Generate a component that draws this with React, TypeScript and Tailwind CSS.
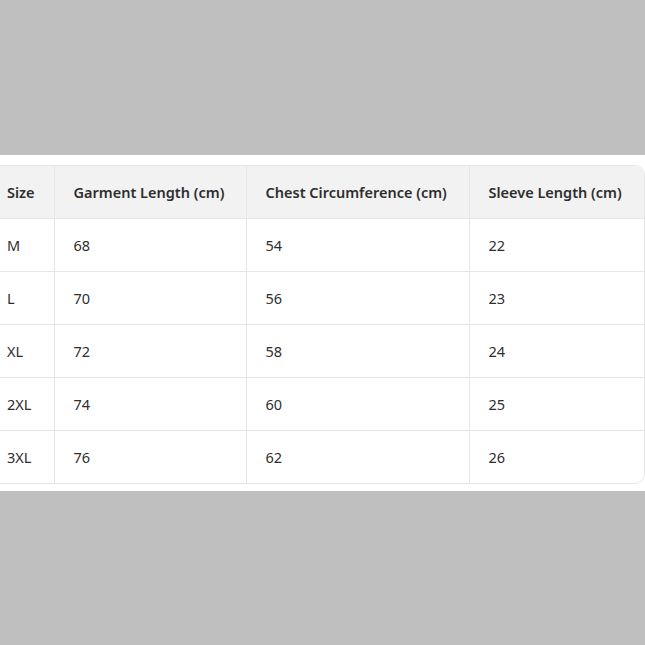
const headers = ["Size", "Garment Length (cm)", "Chest Circumference (cm)", "Sleeve Length (cm)"];

const rows = [
  ["M", "68", "54", "22"],
  ["L", "70", "56", "23"],
  ["XL", "72", "58", "24"],
  ["2XL", "74", "60", "25"],
  ["3XL", "76", "62", "26"],
];

const widths = ["w-[66px]", "w-[192px]", "w-[223px]", "w-[175px]"];

export default function App() {
  return (
    <div className="w-[645px] h-[645px] bg-[#bfbfbf] pt-[155px] font-['Noto_Sans',sans-serif] text-[14.5px] text-[#2e2e2e]">
      <div className="bg-white pt-[10px] pb-[7px] overflow-hidden">
        <div className="-ml-[13px] w-[658px] rounded-[10px] border border-[#e6e6e6] overflow-hidden">
          <table className="table-fixed w-[656px] border-collapse">
            <thead>
              <tr className="bg-[#f2f2f2]">
                {headers.map((h, i) => (
                  <th
                    key={h}
                    className={`${widths[i]} h-[52px] pl-[19px] pr-[12px] pt-[2px] text-left font-semibold whitespace-nowrap border-b border-[#e6e6e6] ${i > 0 ? "border-l" : ""}`}
                  >
                    {h}
                  </th>
                ))}
              </tr>
            </thead>
            <tbody>
              {rows.map((r, ri) => (
                <tr key={r[0]}>
                  {r.map((c, i) => (
                    <td
                      key={i}
                      className={`h-[53px] pl-[19px] pr-[12px] pt-[2px] ${i > 0 ? "border-l border-[#e6e6e6]" : ""} ${ri < rows.length - 1 ? "border-b border-[#e6e6e6]" : ""}`}
                    >
                      {c}
                    </td>
                  ))}
                </tr>
              ))}
            </tbody>
          </table>
        </div>
      </div>
    </div>
  );
}
